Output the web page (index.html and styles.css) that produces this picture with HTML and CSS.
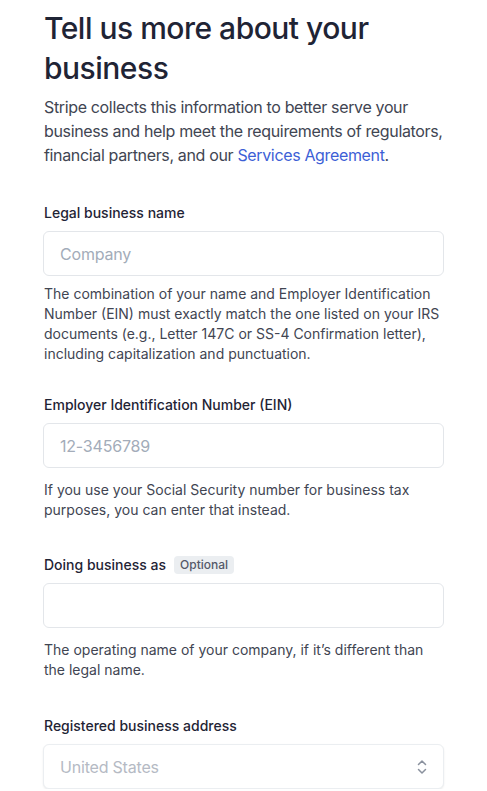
FILE: index.html
```html
<!DOCTYPE html>
<html lang="en">
<head>
<meta charset="utf-8">
<link rel="stylesheet" href="styles.css">
</head>
<body>
<main class="page">
  <h1 class="title">Tell us more about your business</h1>
  <p class="intro">Stripe collects this information to better serve your business and help meet the requirements of regulators, financial partners, and our <a href="#" class="link">Services Agreement</a>.</p>

  <section class="field field-first">
    <label class="label">Legal business name</label>
    <div class="input"><span class="placeholder">Company</span></div>
    <p class="help help-tight">The combination of your name and Employer Identification Number (EIN) must exactly match the one listed on your IRS documents (e.g., Letter 147C or SS-4 Confirmation letter), including capitalization and punctuation.</p>
  </section>

  <section class="field field-second">
    <label class="label">Employer Identification Number (EIN)</label>
    <div class="input"><span class="placeholder">12-3456789</span></div>
    <p class="help">If you use your Social Security number for business tax purposes, you can enter that instead.</p>
  </section>

  <section class="field field-third">
    <label class="label">Doing business as <span class="badge">Optional</span></label>
    <div class="input"></div>
    <p class="help">The operating name of your company, if it’s different than the legal name.</p>
  </section>

  <section class="field">
    <label class="label">Registered business address</label>
    <div class="input select"><span class="placeholder muted">United States</span>
      <svg class="chev" width="10" height="16" viewBox="0 0 10 16" fill="none" stroke="#8a919e" stroke-width="1.5" stroke-linecap="round" stroke-linejoin="round"><path d="M1.5 5.5 L5 2 L8.5 5.5"/><path d="M1.5 10.5 L5 14 L8.5 10.5"/></svg>
    </div>
  </section>
</main>
</body>
</html>
```
FILE: styles.css
```css
* { box-sizing: border-box; }
html, body { margin: 0; padding: 0; background: #fff; }
body {
  font-family: Inter, "Noto Sans", sans-serif;
  color: #1a1f36;
  -webkit-font-smoothing: antialiased;
}
.page {
  padding: 8px 43px 0 43px;
  width: 487px;
}
.title {
  margin: 0 0 0 1px;
  font-size: 30px;
  line-height: 40px;
  font-weight: 500;
  color: #1f2435;
  letter-spacing: -0.5px;
}
.intro {
  margin: 7px -12px 0 1px;
  font-size: 16px;
  line-height: 24px;
  color: #414552;
  letter-spacing: -0.35px;
}
.link { color: #3d5fd6; text-decoration: none; }
.field { margin-top: 36px; }
.field-first { margin-top: 36px; }
.field-second { margin-top: 31px; }
.field-third { margin-top: 35px; }
.label {
  display: flex;
  align-items: center;
  gap: 8px;
  height: 20px;
  margin-left: 1px;
  font-size: 14px;
  line-height: 20px;
  font-weight: 500;
  color: #1f2435;
  margin-bottom: 8px;
}
.badge {
  font-size: 12px;
  line-height: 18px;
  padding: 0 6px;
  border-radius: 4px;
  background: #ebeef1;
  color: #545969;
  font-weight: 500;
}
.input {
  display: flex;
  align-items: center;
  height: 45px;
  border: 1px solid #e3e6ea;
  border-radius: 6px;
  padding: 0 16px;
  background: #fff;
}
.placeholder {
  font-size: 16px;
  color: #a3acb9;
  letter-spacing: -0.2px;
}
.muted { color: #b5bac4; }
.select {
  justify-content: space-between;
  box-shadow: 0 1px 2px rgba(0,0,0,0.08);
  border-color: #ebeef1;
}
.help {
  margin: 12px 0 0 1px;
  font-size: 14px;
  line-height: 20px;
  color: #414552;
}
.help-tight { margin-top: 8px; }
```
